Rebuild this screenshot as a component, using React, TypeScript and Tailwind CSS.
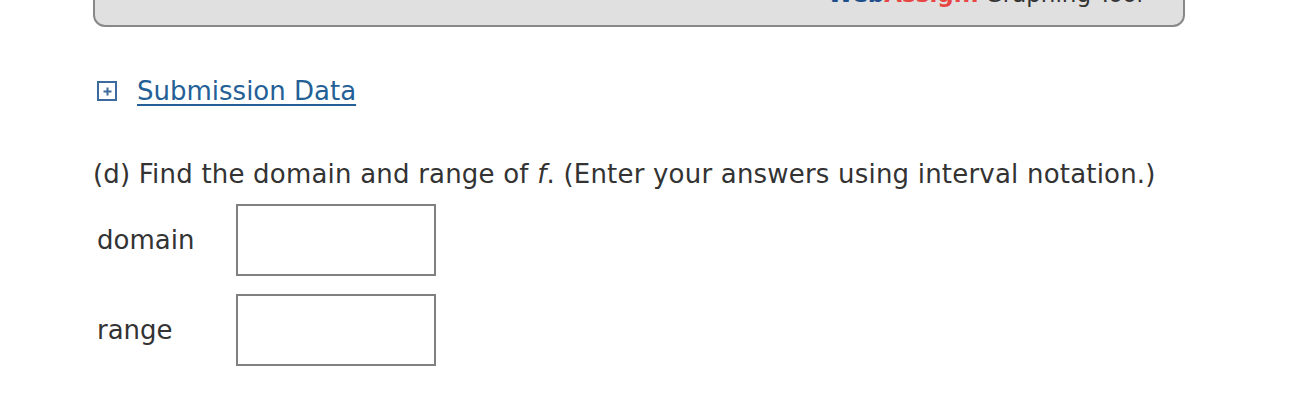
export default function App() {
  const font = { fontFamily: '"DejaVu Sans", Verdana, sans-serif' };
  return (
    <div className="w-[1302px] h-[416px] bg-white overflow-hidden text-[#333]" style={font}>
      <div className="ml-[93px] w-[1092px]">
        {/* graphing tool panel, mostly scrolled off */}
        <div className="-mt-[40px] h-[67px] bg-[#e0e0e0] border-2 border-[#888] rounded-b-[12px] flex items-end justify-end pr-[40px] pb-[19px]">
          <span className="text-[23px] leading-none font-bold text-[#1f4e8c]">Web</span>
          <span className="text-[23px] leading-none font-bold text-[#e84545]">Assign.</span>
          <span className="text-[23px] leading-none text-[#333] ml-[6px]">Graphing Tool</span>
        </div>

        {/* submission data toggle */}
        <div className="mt-[49px] flex items-center gap-[20px] pl-[4px]">
          <div className="w-[20px] h-[20px] border-2 border-[#3c6a9c] bg-white flex items-center justify-center">
            <svg width="11" height="11" viewBox="0 0 11 11">
              <path d="M5.5 1.5v8M1.5 5.5h8" stroke="#3c6a9c" strokeWidth="2" />
            </svg>
          </div>
          <a href="#" className="text-[26px] leading-[30px] text-[#245f96] underline decoration-2 underline-offset-[4px]">
            Submission Data
          </a>
        </div>

        {/* question part d */}
        <p className="mt-[53px] text-[26px] leading-[30px] tracking-[0.2px]">
          (d) Find the domain and range of <i>f</i>. (Enter your answers using interval notation.)
        </p>

        <div className="mt-[15px] flex flex-col gap-[18px] pl-[4px]">
          <div className="flex items-center">
            <span className="w-[139px] text-[26px] leading-[30px]">domain</span>
            <div className="w-[200px] h-[72px] border-2 border-[#808080] bg-white" />
          </div>
          <div className="flex items-center">
            <span className="w-[139px] text-[26px] leading-[30px]">range</span>
            <div className="w-[200px] h-[72px] border-2 border-[#808080] bg-white" />
          </div>
        </div>
      </div>
    </div>
  );
}
